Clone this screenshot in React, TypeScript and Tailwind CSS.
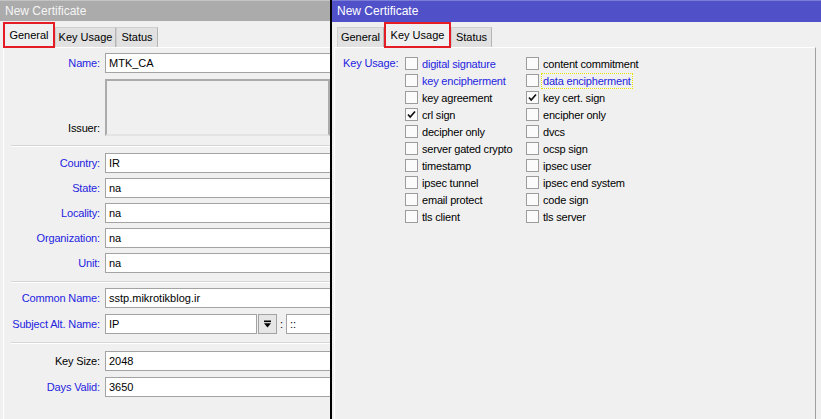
import React from "react";

const blue = "text-[#2424e0]";

function Tab({ label, active, w }: { label: string; active?: boolean; w: string }) {
  if (active) {
    return (
      <div
        className={`${w} h-[26px] -mb-px bg-[#f0f0f0] border-2 border-[#e31c25] flex items-start justify-center pt-[3px] text-[11px] text-black relative z-10`}
      >
        {label}
      </div>
    );
  }
  return (
    <div
      className={`${w} h-[20px] mt-auto bg-[#e1e1e1] border border-b-0 border-[#cfcfcf] border-r-[#b5b5b5] flex items-center justify-center text-[11px] text-black`}
    >
      {label}
    </div>
  );
}

function Sep() {
  return <div className="h-[2px] border-t border-[#d6d6d6] border-b border-b-white" />;
}

function Label({ children, color }: { children: React.ReactNode; color?: string }) {
  return (
    <div className={`w-[89px] shrink-0 flex justify-end whitespace-nowrap text-[11px] tracking-[-0.15px] ${color ?? blue}`}>
      {children}
    </div>
  );
}

function Field({ label, value, color }: { label: string; value: string; color?: string }) {
  return (
    <div className="flex items-center h-[20px]">
      <Label color={color}>{label}</Label>
      <div className="ml-[5px] w-[300px] shrink-0 h-[20px] bg-white border border-[#a3a3a3] px-[3px] text-[11px] text-black flex items-center">
        {value}
      </div>
    </div>
  );
}

function Check({ label, checked, labelBlue, focus }: { label: string; checked?: boolean; labelBlue?: boolean; focus?: boolean }) {
  return (
    <div className="flex items-center h-[17px]">
      <div className="w-[13px] h-[13px] shrink-0 bg-[#fbfbfb] border border-[#9c9c9c] flex items-center justify-center">
        {checked && (
          <svg width="11" height="11" viewBox="0 0 11 11">
            <path d="M2 5.5 L4.2 8 L9 2.5" fill="none" stroke="#111" strokeWidth="1.7" />
          </svg>
        )}
      </div>
      <div
        className={`ml-[2px] px-px text-[11px] tracking-[-0.2px] leading-[14px] whitespace-nowrap ${labelBlue ? blue : "text-black"} ${
          focus ? "border border-dotted border-[#3b3b00] outline-1 outline-dotted outline-[#e6e600] -outline-offset-1" : "border border-transparent"
        }`}
      >
        {label}
      </div>
    </div>
  );
}

function LeftWindow() {
  return (
    <div className="w-[330px] shrink-0 h-full overflow-hidden bg-[#f0f0f0] flex flex-col">
      <div className="h-[21px] bg-[#ababab] border-t border-[#c4c4c4] pl-[5px] text-[12px] leading-[20px] text-[#f5f5f5]">
        New Certificate
      </div>
      <div className="h-[26px] flex items-end pl-[3px]">
        <Tab label="General" active w="w-[52px]" />
        <Tab label="Key Usage" w="w-[61px]" />
        <Tab label="Status" w="w-[42px]" />
      </div>
      <div className="flex-1 ml-[3px] border-t border-l border-white pl-[7px] pt-[5px]">
        <Field label="Name:" value="MTK_CA" />
        <div className="flex items-end mt-[6px]">
          <div className="pb-0">
            <Label color="text-black">Issuer:</Label>
          </div>
          <div className="ml-[5px] w-[300px] h-[57px] bg-[#f0f0f0] border-2 border-[#ababab] border-b-[#e4e4e4]" />
        </div>
        <div className="mt-[9px]">
          <Sep />
        </div>
        <div className="mt-[6px] flex flex-col gap-[5px]">
          <Field label="Country:" value="IR" />
          <Field label="State:" value="na" />
          <Field label="Locality:" value="na" />
          <Field label="Organization:" value="na" />
          <Field label="Unit:" value="na" />
        </div>
        <div className="mt-[8px]">
          <Sep />
        </div>
        <div className="mt-[5px] flex flex-col gap-[6px]">
          <Field label="Common Name:" value="sstp.mikrotikblog.ir" />
          <div className="flex items-center h-[20px]">
            <Label>Subject Alt. Name:</Label>
            <div className="ml-[5px] w-[152px] shrink-0 h-[20px] bg-white border border-[#a3a3a3] px-[3px] text-[11px] text-black flex items-center">
              IP
            </div>
            <div className="ml-px w-[19px] shrink-0 h-[20px] bg-[#e6e6e6] border border-[#a3a3a3] flex items-center justify-center">
              <svg width="9" height="9" viewBox="0 0 9 9">
                <rect x="1" y="0.5" width="7" height="1.6" fill="#000" />
                <path d="M1 3.2 H8 L4.5 7.5 Z" fill="#000" />
              </svg>
            </div>
            <div className="w-[9px] shrink-0 text-center text-[11px] text-black">:</div>
            <div className="w-[100px] shrink-0 h-[20px] bg-white border border-[#a3a3a3] px-[3px] text-[11px] text-black flex items-center">
              ::
            </div>
          </div>
        </div>
        <div className="mt-[8px]">
          <Sep />
        </div>
        <div className="mt-[7px] flex flex-col gap-[6px]">
          <Field label="Key Size:" value="2048" color="text-black" />
          <Field label="Days Valid:" value="3650" />
        </div>
      </div>
    </div>
  );
}

const col1: [string, boolean?, boolean?][] = [
  ["digital signature", false, true],
  ["key encipherment", false, true],
  ["key agreement"],
  ["crl sign", true],
  ["decipher only"],
  ["server gated crypto"],
  ["timestamp"],
  ["ipsec tunnel"],
  ["email protect"],
  ["tls client"],
];

const col2: [string, boolean?, boolean?][] = [
  ["content commitment"],
  ["data encipherment", false, true],
  ["key cert. sign", true],
  ["encipher only"],
  ["dvcs"],
  ["ocsp sign"],
  ["ipsec user"],
  ["ipsec end system"],
  ["code sign"],
  ["tls server"],
];

function RightWindow() {
  return (
    <div className="flex-1 h-full bg-[#f0f0f0] flex flex-col">
      <div className="h-[22px] bg-[#5050c9] border-t border-[#7b7bd8] pl-[5px] text-[12px] leading-[21px] text-white">
        New Certificate
      </div>
      <div className="h-[25px] flex items-end pl-[5px]">
        <Tab label="General" w="w-[47px]" />
        <Tab label="Key Usage" active w="w-[67px]" />
        <Tab label="Status" w="w-[41px]" />
      </div>
      <div className="flex-1 ml-[2px] mr-[5px] border-t border-l border-white border-r border-r-[#a0a0a0] pl-[8px] pt-[7px] flex">
        <div className={`w-[62px] shrink-0 h-[17px] flex items-center text-[11px] tracking-[-0.15px] ${blue}`}>Key Usage:</div>
        <div className="w-[121px] shrink-0 flex flex-col">
          {col1.map(([l, c, b]) => (
            <Check key={l} label={l} checked={c} labelBlue={b} />
          ))}
        </div>
        <div className="flex flex-col">
          {col2.map(([l, c, b]) => (
            <Check key={l} label={l} checked={c} labelBlue={b} focus={l === "data encipherment"} />
          ))}
        </div>
      </div>
    </div>
  );
}

export default function App() {
  return (
    <div className="w-[821px] h-[419px] overflow-hidden flex font-['Liberation_Sans',Arial,sans-serif] bg-[#f0f0f0]">
      <LeftWindow />
      <div className="w-[2px] shrink-0 bg-black" />
      <RightWindow />
    </div>
  );
}
